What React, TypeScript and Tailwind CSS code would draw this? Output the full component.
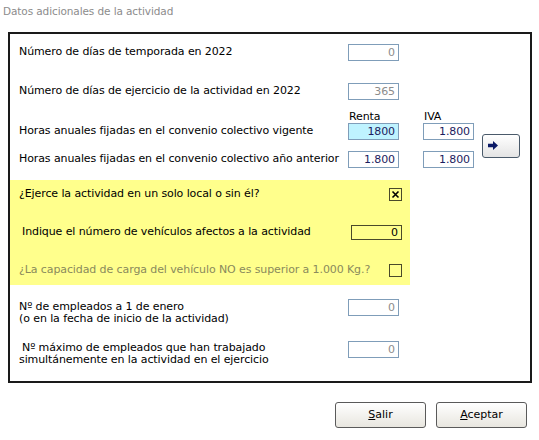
import React from "react";

const font = { fontFamily: '"DejaVu Sans", Tahoma, sans-serif' };

function Field({ value, tone = "gray", className = "" }: { value: string; tone?: "gray" | "navy" | "black"; className?: string }) {
  const color = tone === "gray" ? "text-[#8c8c8c]" : tone === "navy" ? "text-[#1c1c5e]" : "text-black";
  return (
    <div className={`h-[17px] w-[51px] shrink-0 border border-[#7f9db9] flex items-center justify-end pr-[3px] text-[11px] leading-none ${color} ${className}`}>
      {value}
    </div>
  );
}

function Check({ checked }: { checked?: boolean }) {
  return (
    <div className="w-[13px] h-[13px] shrink-0 border border-[#4a4a2a] flex items-center justify-center">
      {checked && (
        <svg width="9" height="9" viewBox="0 0 9 9">
          <path d="M1.5 1.5 L7.5 7.5 M7.5 1.5 L1.5 7.5" stroke="#000" strokeWidth="1.6" />
        </svg>
      )}
    </div>
  );
}

function WinButton({ first, rest }: { first: string; rest: string }) {
  return (
    <button className="w-[91px] h-[26px] rounded-[3px] border border-[#5a5a5a] bg-gradient-to-b from-white to-[#e8e6df] text-[11px] text-black">
      <span className="underline">{first}</span>
      {rest}
    </button>
  );
}

export default function App() {
  return (
    <div className="w-[539px] h-[440px] bg-white relative overflow-hidden text-black" style={font}>
      <div className="pl-[3px] pt-[4px] h-[32px] text-[10.5px] leading-[14px] tracking-[-0.1px] text-[#8c8c8c]">Datos adicionales de la actividad</div>

      <div className="ml-[8px] w-[524px] h-[351px] border-2 border-[#1a1a1a] flex flex-col text-[11px] tracking-[-0.1px]">
        {/* fila 1 */}
        <div className="mt-[10px] h-[17px] flex items-center">
          <span className="pl-[9px] w-[338px] shrink-0 whitespace-nowrap">Número de días de temporada en 2022</span>
          <Field value="0" />
        </div>

        {/* fila 2 */}
        <div className="mt-[22px] h-[17px] flex items-center">
          <span className="pl-[9px] w-[338px] shrink-0 whitespace-nowrap">Número de días de ejercicio de la actividad en 2022</span>
          <Field value="365" />
        </div>

        {/* Renta / IVA */}
        <div className="mt-[10px] h-[13px] flex items-center leading-none">
          <span className="ml-[339px] w-[75px]">Renta</span>
          <span>IVA</span>
        </div>

        {/* filas horas + flecha */}
        <div className="flex items-center">
          <div className="flex flex-col gap-[11px]">
            <div className="h-[17px] flex items-center">
              <span className="pl-[9px] w-[338px] shrink-0 whitespace-nowrap">Horas anuales fijadas en el convenio colectivo vigente</span>
              <Field value="1800" tone="navy" className="bg-[#bff3ff]" />
              <Field value="1.800" tone="navy" className="ml-[24px]" />
            </div>
            <div className="h-[17px] flex items-center">
              <span className="pl-[9px] w-[338px] shrink-0 whitespace-nowrap">Horas anuales fijadas en el convenio colectivo año anterior</span>
              <Field value="1.800" tone="navy" />
              <Field value="1.800" tone="navy" className="ml-[24px]" />
            </div>
          </div>
          <button className="ml-[8px] w-[38px] h-[24px] rounded-[3px] border border-[#4a5a6a] bg-gradient-to-b from-white to-[#e4e4e4] flex items-center pl-[5px]">
            <svg width="10" height="9" viewBox="0 0 10 9">
              <path d="M0 2.8 H5 V0 L10 4.5 L5 9 V6.2 H0 Z" fill="#0b1a66" />
            </svg>
          </button>
        </div>

        {/* zona amarilla */}
        <div className="mt-[12px] w-[400px] h-[105px] bg-[#ffff8c] flex flex-col pt-[6px] gap-[21px]">
          <div className="h-[17px] flex items-center justify-between pl-[9px] pr-[8px]">
            <span className="whitespace-nowrap">¿Ejerce la actividad en un solo local o sin él?</span>
            <Check checked />
          </div>
          <div className="h-[17px] flex items-center justify-between pl-[12px] pr-[8px]">
            <span className="whitespace-nowrap">Indique el número de vehículos afectos a la actividad</span>
            <div className="h-[15px] w-[51px] shrink-0 border border-[#4a4a2a] flex items-center justify-end pr-[3px] leading-none">0</div>
          </div>
          <div className="h-[17px] flex items-center justify-between pl-[9px] pr-[8px]">
            <span className="whitespace-nowrap text-[#8a8a5c]">¿La capacidad de carga del vehículo NO es superior a 1.000 Kg.?</span>
            <Check />
          </div>
        </div>

        {/* empleados */}
        <div className="mt-[14px] flex items-start">
          <div className="pl-[9px] w-[338px] shrink-0 mt-[2px] leading-[12px] whitespace-nowrap">
            Nº de empleados a 1 de enero
            <br />
            (o en la fecha de inicio de la actividad)
          </div>
          <Field value="0" />
        </div>
        <div className="mt-[16px] flex items-start">
          <div className="pl-[12px] w-[338px] shrink-0 mt-[1px] leading-[12px] whitespace-nowrap">
            Nº máximo de empleados que han trabajado
            <br />
            <span className="-ml-[3px]">simultánemente en la actividad en el ejercicio</span>
          </div>
          <Field value="0" />
        </div>
      </div>

      <div className="mt-[19px] pr-[12px] flex justify-end gap-[10px]">
        <WinButton first="S" rest="alir" />
        <WinButton first="A" rest="ceptar" />
      </div>
    </div>
  );
}
